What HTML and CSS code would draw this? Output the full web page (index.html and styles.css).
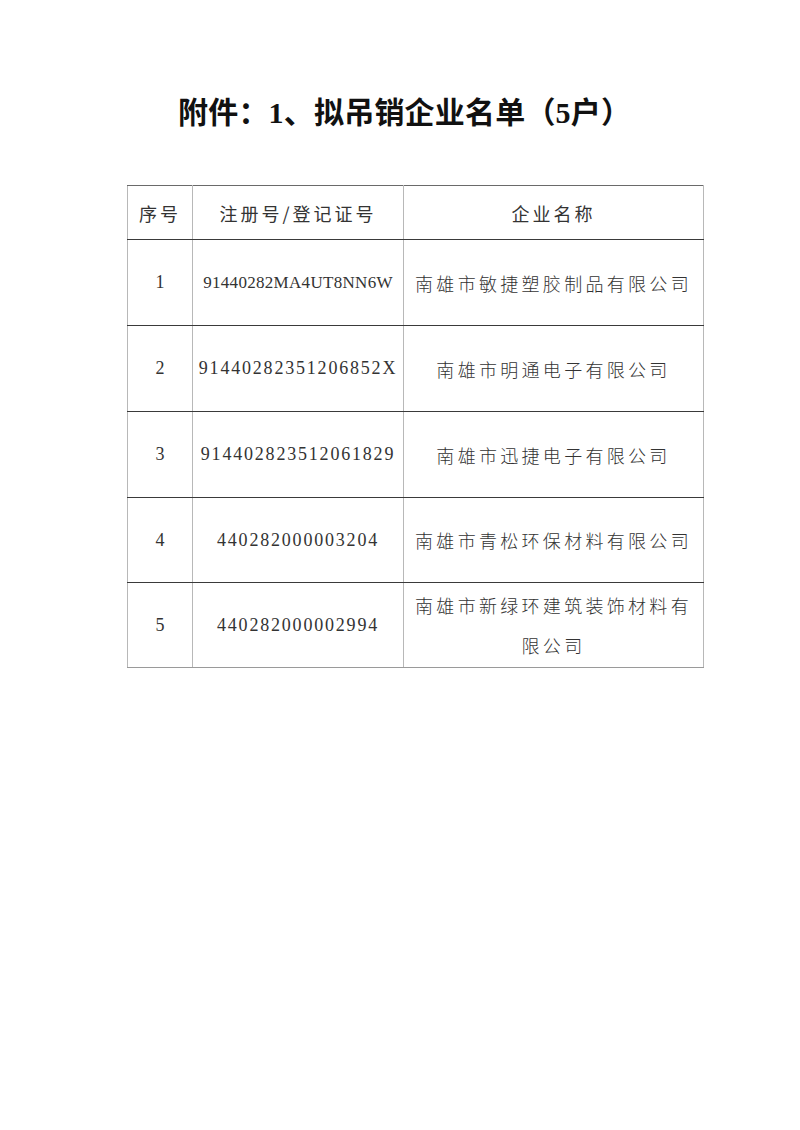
FILE: index.html
```html
<!DOCTYPE html>
<html lang="zh-CN">
<head>
<meta charset="utf-8">
<title>拟吊销企业名单</title>
<link rel="stylesheet" href="styles.css">
</head>
<body>
<div class="page">
  <h1 class="title">附件：1、拟吊销企业名单（5户）</h1>
  <table class="list">
    <colgroup>
      <col class="c-no">
      <col class="c-id">
      <col class="c-name">
    </colgroup>
    <thead>
      <tr class="head">
        <th>序号</th>
        <th>注册号/登记证号</th>
        <th>企业名称</th>
      </tr>
    </thead>
    <tbody>
      <tr class="r1">
        <td class="num">1</td>
        <td class="code tight">91440282MA4UT8NN6W</td>
        <td class="name">南雄市敏捷塑胶制品有限公司</td>
      </tr>
      <tr class="r2">
        <td class="num">2</td>
        <td class="code">91440282351206852X</td>
        <td class="name">南雄市明通电子有限公司</td>
      </tr>
      <tr class="r3">
        <td class="num">3</td>
        <td class="code">914402823512061829</td>
        <td class="name">南雄市迅捷电子有限公司</td>
      </tr>
      <tr class="r4">
        <td class="num">4</td>
        <td class="code">440282000003204</td>
        <td class="name">南雄市青松环保材料有限公司</td>
      </tr>
      <tr class="r5">
        <td class="num">5</td>
        <td class="code">440282000002994</td>
        <td class="name two">南雄市新绿环建筑装饰材料有<br>限公司</td>
      </tr>
    </tbody>
  </table>
</div>
</body>
</html>
```

FILE: styles.css
```css
html, body {
  margin: 0;
  padding: 0;
  background: #ffffff;
}
.page {
  width: 800px;
  height: 1130px;
  box-sizing: border-box;
  padding: 96px 0 0 127px;
  font-family: "Liberation Serif", "Noto Sans CJK SC", serif;
  color: #2a2a2a;
}
.title {
  margin: 0 0 55px 51px;
  font-family: "Liberation Serif", "Noto Sans CJK SC", serif;
  font-weight: bold;
  font-size: 30px;
  line-height: 34px;
  letter-spacing: 0.2px;
  color: #111;
  white-space: nowrap;
}
.list {
  border-collapse: collapse;
  table-layout: fixed;
  width: 576px;
}
.c-no { width: 65px; }
.c-id { width: 211px; }
.c-name { width: 300px; }
.list th,
.list td {
  padding: 0;
  text-align: center;
  vertical-align: middle;
  border-left: 1px solid #b8b8b8;
  border-right: 1px solid #b8b8b8;
  border-bottom: 1px solid #3a3a3a;
}
.list th {
  height: 53px;
  border-top: 1px solid #6a6a6a;
  font-family: "Noto Sans CJK SC", sans-serif;
  font-weight: normal;
  font-size: 18px;
  letter-spacing: 3px;
  color: #333;
}
.list td {
  height: 85px;
  font-size: 18px;
  color: #333;
}
.list .r4 td { height: 84px; }
.list .r5 td {
  height: 84px;
  border-bottom-color: #9a9a9a;
}
.num {
  font-family: "Liberation Serif", serif;
}
.code {
  font-family: "Liberation Serif", serif;
  letter-spacing: 1.8px;
  white-space: nowrap;
}
.code.tight {
  font-size: 17px;
  letter-spacing: 0.3px;
}
.name {
  font-family: "Noto Sans CJK SC", sans-serif;
  font-weight: 300;
  font-size: 18px;
  letter-spacing: 3.3px;
  line-height: 40px;
  white-space: nowrap;
}
.two {
  padding-top: 2px;
}
```
